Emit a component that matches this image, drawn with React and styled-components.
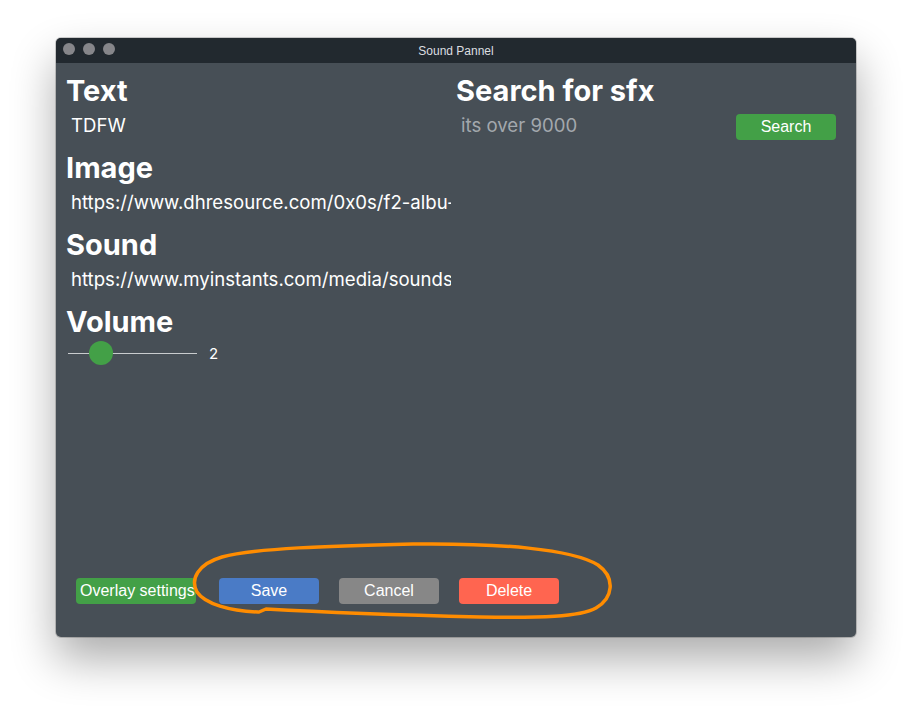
import React, { useState } from "react";
import styled, { createGlobalStyle } from "styled-components";

const Global = createGlobalStyle`
  html, body { margin: 0; padding: 0; background: #ffffff; }
  body { font-family: Inter, "Noto Sans", sans-serif; }
  * { box-sizing: border-box; }
`;

const Stage = styled.div`
  width: 912px;
  height: 712px;
  padding: 38px 0 0 56px;
  background: #ffffff;
`;

const Window = styled.div`
  position: relative;
  width: 800px;
  height: 599px;
  display: flex;
  flex-direction: column;
  border-radius: 5px;
  overflow: hidden;
  background: #474f56;
  box-shadow: 0 22px 45px rgba(0, 0, 0, 0.33), 0 0 0 1px rgba(0, 0, 0, 0.18);
`;

const TitleBar = styled.div`
  position: relative;
  height: 25px;
  flex: none;
  display: flex;
  align-items: center;
  justify-content: center;
  background: #22292f;
`;

const Lights = styled.div`
  position: absolute;
  left: 7px;
  top: 5px;
  display: flex;
  gap: 8px;
`;

const Light = styled.span`
  width: 12px;
  height: 12px;
  border-radius: 50%;
  background: #86868a;
`;

const Title = styled.span`
  font-family: "Liberation Sans", Arial, sans-serif;
  font-size: 12px;
  color: #dcdee0;
`;

const Body = styled.div`
  flex: 1;
  display: flex;
  flex-direction: column;
  padding: 10px 10px 33px 10px;
`;

const Columns = styled.div`
  display: grid;
  grid-template-columns: 390px 390px;
`;

const Column = styled.div`
  display: flex;
  flex-direction: column;
`;

const Section = styled.div`
  display: flex;
  flex-direction: column;
  margin-bottom: 10px;
`;

const Heading = styled.h2`
  margin: 0;
  font-family: Inter, "Noto Sans", sans-serif;
  font-weight: 700;
  font-size: 29px;
  line-height: 35px;
  color: #ffffff;
`;

const Field = styled.input`
  display: block;
  width: ${(p) => p.$width || "390px"};
  height: 32px;
  padding: 2px 5px 0 5px;
  border: none;
  outline: none;
  background: transparent;
  font-family: Inter, "Noto Sans", sans-serif;
  font-size: 18.6px;
  color: #ffffff;
  &::placeholder { color: #a3a8ad; }
`;

const SearchRow = styled.div`
  display: flex;
  align-items: flex-start;
  justify-content: space-between;
  padding-right: 10px;
`;

const Button = styled.button`
  width: ${(p) => p.$width || "100px"};
  height: 26px;
  margin-top: ${(p) => p.$top || "0"};
  margin-right: ${(p) => p.$after || "0"};
  padding: 0 4px;
  border: none;
  border-radius: 4px;
  background: ${(p) => p.$bg};
  color: #ffffff;
  font-family: "Liberation Sans", Arial, sans-serif;
  font-size: 16px;
  line-height: 26px;
  white-space: nowrap;
  overflow: visible;
  text-align: center;
  cursor: pointer;
`;

const SliderRow = styled.div`
  display: flex;
  align-items: center;
  height: 24px;
  margin-top: 2px;
  padding-left: 2px;
  gap: 12px;
`;

const Range = styled.input`
  -webkit-appearance: none;
  appearance: none;
  width: 129px;
  height: 24px;
  margin: 0;
  background: transparent;
  &::-webkit-slider-runnable-track {
    height: 1px;
    background: #c9ccce;
  }
  &::-webkit-slider-thumb {
    -webkit-appearance: none;
    width: 24px;
    height: 24px;
    margin-top: -11.5px;
    border-radius: 50%;
    background: #43a047;
    border: none;
  }
`;

const Value = styled.span`
  font-family: Inter, "Noto Sans", sans-serif;
  font-size: 15px;
  color: #ffffff;
`;

const Footer = styled.div`
  margin-top: auto;
  display: flex;
  align-items: center;
  padding-left: 10px;
  gap: 20px;
`;

const Annotation = styled.svg`
  position: absolute;
  left: 0;
  top: 0;
  width: 800px;
  height: 599px;
  pointer-events: none;
`;

export default function App() {
  const [volume, setVolume] = useState(2);
  return (
    <>
      <Global />
      <Stage>
        <Window>
          <TitleBar>
            <Lights>
              <Light />
              <Light />
              <Light />
            </Lights>
            <Title>Sound Pannel</Title>
          </TitleBar>
          <Body>
            <Columns>
              <Column>
                <Section>
                  <Heading>Text</Heading>
                  <Field defaultValue="TDFW" />
                </Section>
                <Section>
                  <Heading>Image</Heading>
                  <Field defaultValue="https://www.dhresource.com/0x0s/f2-albu-g5-M00-7A-5B.jpg" />
                </Section>
                <Section>
                  <Heading>Sound</Heading>
                  <Field defaultValue="https://www.myinstants.com/media/sounds/tdfw.mp3" />
                </Section>
                <Section>
                  <Heading>Volume</Heading>
                  <SliderRow>
                    <Range
                      type="range"
                      min="0"
                      max="10"
                      value={volume}
                      onChange={(e) => setVolume(Number(e.target.value))}
                    />
                    <Value>{volume}</Value>
                  </SliderRow>
                </Section>
              </Column>
              <Column>
                <Section>
                  <Heading>Search for sfx</Heading>
                  <SearchRow>
                    <Field $width="260px" placeholder="its over 9000" />
                    <Button $bg="#43a047" $top="6px">Search</Button>
                  </SearchRow>
                </Section>
              </Column>
            </Columns>
            <Footer>
              <Button $bg="#43a047" $width="120px" $after="3px">Overlay settings</Button>
              <Button $bg="#4a7bc6">Save</Button>
              <Button $bg="#878787">Cancel</Button>
              <Button $bg="#ff6550">Delete</Button>
            </Footer>
          </Body>
          <Annotation viewBox="56 38 800 599">
            <path
              d="M258 612 C 230 611, 205 604, 197 592 C 190 579, 198 564, 222 557 C 255 548, 330 546, 413 544 C 500 543, 572 549, 598 565 C 616 578, 613 598, 596 608 C 580 617, 540 618, 480 617 C 400 615, 320 612, 266 609 L 259 612"
              fill="none"
              stroke="#ff8c00"
              strokeWidth="3.5"
              strokeLinecap="round"
              strokeLinejoin="round"
            />
          </Annotation>
        </Window>
      </Stage>
    </>
  );
}
